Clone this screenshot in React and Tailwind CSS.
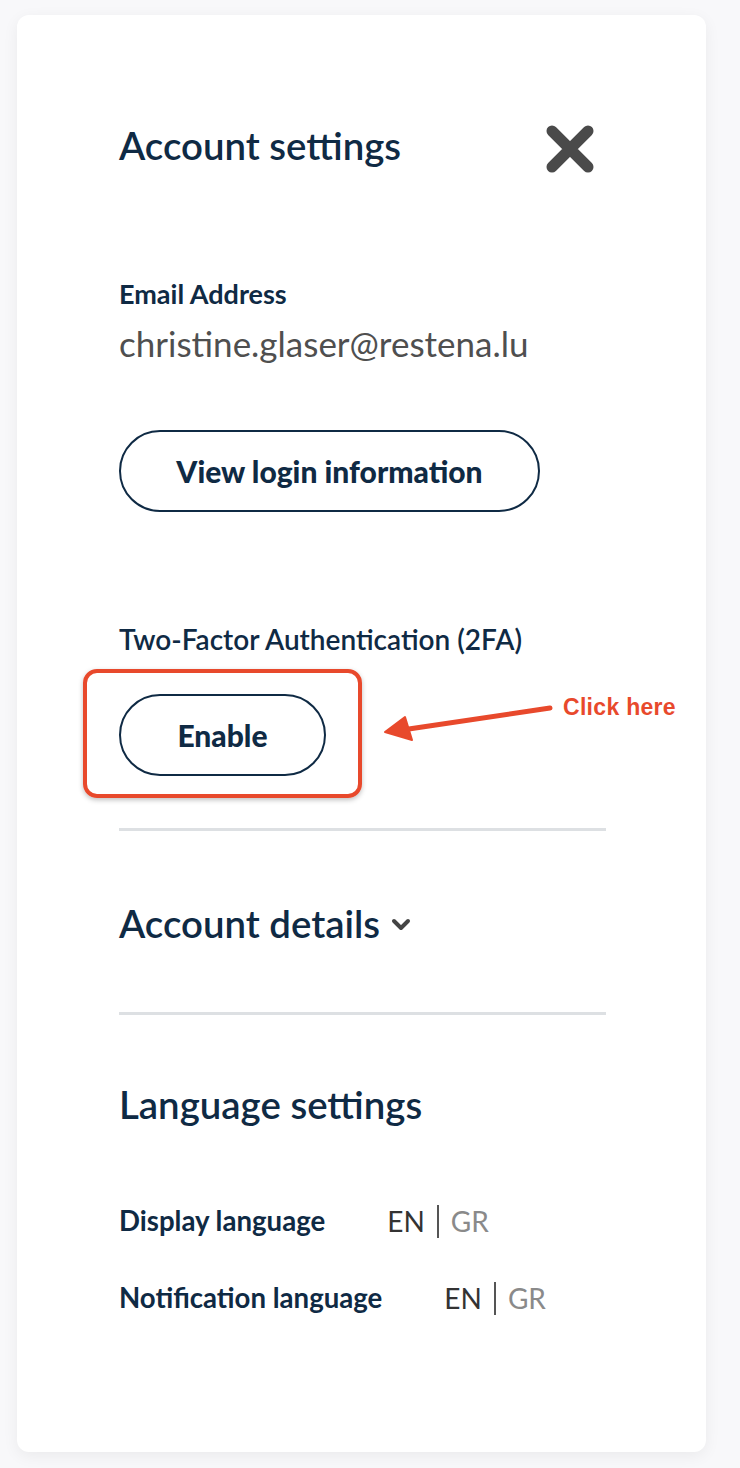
const navy = 'text-[#0f2a44]'

function CloseIcon() {
  return (
    <svg width="52" height="52" viewBox="0 0 52 52" className="shrink-0">
      <path d="M8 8 L44 44 M44 8 L8 44" stroke="#4a4a4a" strokeWidth="11" strokeLinecap="round" />
    </svg>
  )
}

function Chevron() {
  return (
    <svg width="20" height="14" viewBox="0 0 20 14" className="shrink-0 ml-[11px] mt-[4px]">
      <path d="M3 3 L10 10 L17 3" fill="none" stroke="#444444" strokeWidth="4" strokeLinecap="round" strokeLinejoin="round" />
    </svg>
  )
}

function PillButton({ children, className }) {
  return (
    <button
      className={`h-[82px] rounded-full border-2 border-[#0f2a44] bg-white text-[30px] font-black ${navy} ${className}`}
    >
      {children}
    </button>
  )
}

function LangRow({ label }) {
  return (
    <div className="flex items-center h-[36px]">
      <span className={`text-[27.6px] font-bold ${navy}`}>{label}</span>
      <div className="flex items-center text-[28px] ml-[62px]">
        <span className="text-[#333333]">EN</span>
        <span className="mx-[12px] w-[2px] h-[33px] bg-[#555555]" />
        <span className="text-[#8a8a8a]">GR</span>
      </div>
    </div>
  )
}

export default function App() {
  return (
    <div className="min-h-screen bg-[#f8f8fa] pt-[15px] pl-[17px]" style={{ fontFamily: 'Lato, "Open Sans", sans-serif' }}>
      <div className="w-[689px] h-[1437px] bg-white rounded-[12px] shadow-[0_4px_16px_rgba(0,0,0,0.06)] pl-[102px] pr-[100px] pt-[100px]">
        <div className="flex items-center justify-between h-[60px]">
          <h1 className={`text-[38.4px] font-semibold leading-none ${navy}`}>Account settings</h1>
          <div className="mr-[10px] mt-[8px]">
            <CloseIcon />
          </div>
        </div>

        <div className="mt-[104px]">
          <p className={`text-[27px] font-bold leading-[30px] ${navy}`}>Email Address</p>
          <p className="mt-[14px] text-[35px] leading-[40px] text-[#4f4f4f]">christine.glaser@restena.lu</p>
        </div>

        <PillButton className="mt-[67px] w-[421px]">View login information</PillButton>

        <p className={`mt-[110px] text-[28px] font-semibold leading-[34px] ${navy}`}>Two-Factor Authentication (2FA)</p>

        <div className="relative mt-[38px] h-[81px]">
          <PillButton className="w-[207px] h-[81px]">Enable</PillButton>
          <div className="absolute left-[-36px] top-[-25px] w-[279px] h-[129px] rounded-[14px] border-[4px] border-[#e8492c] shadow-[0_2px_5px_rgba(0,0,0,0.25)] pointer-events-none" />
          <svg className="absolute left-[261px] top-0" width="180" height="60" viewBox="0 0 180 60">
            <path d="M170 14 L22 36" stroke="#e8492c" strokeWidth="5" strokeLinecap="round" />
            <path d="M5 38 L25 23 L32 46 Z" fill="#e8492c" stroke="#e8492c" strokeWidth="2" strokeLinejoin="round" />
          </svg>
          <span className="absolute left-[444px] top-[-4px] whitespace-nowrap text-[23px] tracking-[0.3px] font-bold text-[#e8492c]" style={{ fontFamily: '"Liberation Sans", Arial, sans-serif' }}>
            Click here
          </span>
        </div>

        <div className="mt-[53px] h-[3px] bg-[#dde0e3]" />

        <div className="mt-[72px] flex items-center h-[40px]">
          <h2 className={`text-[38.4px] font-semibold leading-none ${navy}`}>Account details</h2>
          <Chevron />
        </div>

        <div className="mt-[69px] h-[3px] bg-[#dde0e3]" />

        <h2 className={`mt-[67px] text-[38.4px] font-semibold leading-[44px] ${navy}`}>Language settings</h2>

        <div className="mt-[77px] flex flex-col gap-[41px]">
          <LangRow label="Display language" />
          <LangRow label="Notification language" />
        </div>
      </div>
    </div>
  )
}
